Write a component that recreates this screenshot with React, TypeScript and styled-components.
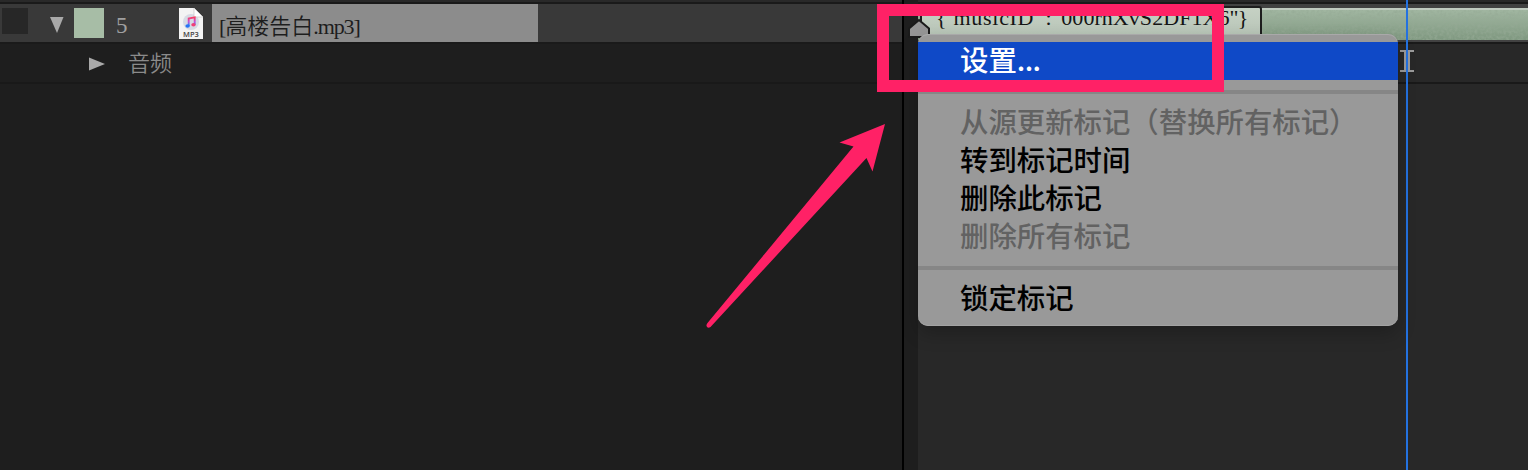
import React from 'react';
import styled, { createGlobalStyle } from 'styled-components';

const Global = createGlobalStyle`
  * { box-sizing: border-box; }
  body { margin: 0; background: #1e1e1e; overflow: hidden; }
`;

const PINK = '#ff2166';
const serif = '"Liberation Serif", "Noto Sans CJK SC", serif';

const Screen = styled.div`
  position: relative;
  display: flex;
  width: 1528px;
  height: 470px;
  overflow: hidden;
  background: #1e1e1e;
`;

const LayerPanel = styled.section`
  display: flex;
  flex-direction: column;
  width: 902px;
  border-top: 2px solid #292929;
`;

const LayerRow = styled.div<{ $selected?: boolean }>`
  display: flex;
  height: 40px;
  border-top: 2px solid #1a1a1a;
  background: ${(p) => (p.$selected ? '#393939' : '#1e1e1e')};
`;

const Rest = styled.div`
  flex: 1;
  border-top: 2px solid #191919;
`;

const Switch = styled.div`
  width: 26px;
  height: 26px;
  margin: 4px 0 0 2px;
  background: #272727;
`;

const TwirlDown = styled.svg`
  width: 14px;
  height: 17px;
  margin: 13px 0 0 22px;
`;

const LabelSwatch = styled.div`
  width: 30px;
  height: 30px;
  margin: 4px 0 0 10px;
  background: #a7bda6;
`;

const LayerNumber = styled.span`
  width: 62px;
  margin: 8px 0 0 12px;
  font: 23px/28px ${serif};
  color: #a0a0a0;
`;

const FileIcon = styled.svg`
  width: 26px;
  height: 32px;
  margin: 4px 0 0 0;
`;

const SourceName = styled.div`
  width: 326px;
  height: 38px;
  margin-left: 8px;
  padding: 8px 0 0 7px;
  background: #8c8c8c;
  font: 350 22px/30px ${serif};
  color: #1d1d1d;
  white-space: nowrap;
`;

const Latin = styled.span`
  letter-spacing: -1.1px;
`;

const TwirlRight = styled.svg`
  width: 17px;
  height: 14px;
  margin: 13px 0 0 88px;
`;

const GroupName = styled.span`
  margin: 1px 0 0 23px;
  font: 350 22px/32px "Noto Sans CJK SC", sans-serif;
  color: #8b8b8b;
`;

const Gutter = styled.div`
  width: 16px;
  border-left: 2px solid #000;
  background: #1e1e1e;
`;

const Timeline = styled.section`
  display: flex;
  flex: 1;
  flex-direction: column;
  border-top: 2px solid #292929;
  background: #282828;
`;

const Track = styled.div<{ $clip?: boolean }>`
  height: 40px;
  border-top: 2px solid #1a1a1a;
  padding-top: 4px;
  background: ${(p) => (p.$clip ? '#424242' : '#282828')};
`;

const Clip = styled.svg`
  display: block;
  width: 610px;
  height: 32px;
`;

const MarkerLabel = styled.div`
  position: absolute;
  left: 920px;
  top: 6px;
  width: 342px;
  height: 40px;
  padding-left: 14px;
  border: 2px solid #1d1d1d;
  border-top-right-radius: 3px;
  background: linear-gradient(#c6d1c4, #b3c1b3);
  font: 22px/20px ${serif};
  color: #151515;
  white-space: pre;
`;

const Tracked = styled.span<{ $by: number }>`
  letter-spacing: ${(p) => p.$by}px;
`;

const MarkerPin = styled.svg`
  position: absolute;
  left: 907px;
  top: 17px;
  width: 24px;
  height: 22px;
`;

const Playhead = styled.div`
  position: absolute;
  left: 1406px;
  top: 0;
  width: 2px;
  height: 470px;
  background: #2472e0;
`;

const TextCursor = styled.svg`
  position: absolute;
  left: 1400px;
  top: 50px;
  width: 14px;
  height: 22px;
`;

const Menu = styled.ul`
  position: absolute;
  left: 918px;
  top: 34px;
  width: 480px;
  height: 292px;
  margin: 0;
  padding: 8px 0 0;
  list-style: none;
  border-radius: 10px;
  background: #999;
  box-shadow: 0 8px 18px rgba(0, 0, 0, 0.22), inset 0 1px 0 #a9a9a9, inset 0 -1px 0 #a3a3a3;
`;

const MenuItem = styled.li<{ $active?: boolean; $disabled?: boolean }>`
  height: 38px;
  padding-left: 42px;
  font: 500 28.4px/33px "Noto Sans CJK SC", sans-serif;
  color: ${(p) => (p.$active ? '#fff' : p.$disabled ? '#626262' : '#000')};
  background: ${(p) => (p.$active ? '#0f49c7' : 'transparent')};
  white-space: nowrap;
`;

const Separator = styled.li`
  height: 4px;
  margin: 10px 0;
  background: #868686;
`;

const Highlight = styled.div`
  position: absolute;
  left: 877px;
  top: 4px;
  width: 347px;
  height: 88px;
  border: 12px solid ${PINK};
`;

const Arrow = styled.svg`
  position: absolute;
  left: 700px;
  top: 120px;
  width: 190px;
  height: 212px;
`;

export default function App() {
  return (
    <Screen>
      <Global />
      <LayerPanel>
        <LayerRow $selected>
          <Switch />
          <TwirlDown viewBox="0 0 14 17"><path d="M0 0h13.5L7 16z" fill="#a9a9a9" /></TwirlDown>
          <LabelSwatch />
          <LayerNumber>5</LayerNumber>
          <FileIcon viewBox="0 0 26 32">
            <defs>
              <linearGradient id="note" x1="0" y1="0" x2="0" y2="1">
                <stop offset="0" stopColor="#fa3d62" />
                <stop offset=".5" stopColor="#c552d8" />
                <stop offset="1" stopColor="#2494f5" />
              </linearGradient>
            </defs>
            <path d="M1 0h15l9 9v22H1z" fill="#f3f3f3" />
            <circle cx="13" cy="14" r="8" fill="#d6dae4" />
            <path d="M16 0v9h9z" fill="#fff" stroke="#c5c5c5" strokeWidth=".7" />
            <path d="M10.700 18v-7.500l6-1.200v7.500" fill="none" stroke="url(#note)" strokeWidth="1.900" />
            <ellipse cx="9.600" cy="18" rx="2.200" ry="1.700" fill="#2474f5" />
            <ellipse cx="15.500" cy="16.800" rx="2.200" ry="1.700" fill="#f13e78" />
            <text x="13" y="29" textAnchor="middle" fontFamily="Open Sans, sans-serif" fontSize="7.500" fontWeight="600" fill="#444">MP3</text>
          </FileIcon>
          <SourceName><Latin>[</Latin>高楼告白<Latin>.mp3]</Latin></SourceName>
        </LayerRow>
        <LayerRow>
          <TwirlRight viewBox="0 0 17 14"><path d="M1 .5 17 7 1 13.5z" fill="#a9a9a9" /></TwirlRight>
          <GroupName>音频</GroupName>
        </LayerRow>
        <Rest />
      </LayerPanel>
      <Gutter />
      <Timeline>
        <Track $clip>
          <Clip viewBox="0 0 610 32">
            <defs>
              <linearGradient id="clip" x1="0" y1="0" x2="0" y2="1">
                <stop offset="0" stopColor="#a3b8a3" />
                <stop offset="1" stopColor="#7f9880" />
              </linearGradient>
              <filter id="grain" x="0" y="0" width="100%" height="100%">
                <feTurbulence type="fractalNoise" baseFrequency=".35" numOctaves="2" />
                <feColorMatrix values="0 0 0 0 .3  0 0 0 0 .4  0 0 0 0 .3  1.6 0 0 0 -.6" />
              </filter>
            </defs>
            <rect width="610" height="32" fill="url(#clip)" />
            <rect width="610" height="32" filter="url(#grain)" />
            <rect width="610" height="2" fill="#c0cbc0" />
          </Clip>
        </Track>
        <Track />
        <Rest />
      </Timeline>
      <MarkerLabel>
        <Tracked $by={-1}>{'{"'}</Tracked>
        <Tracked $by={0.7}>musicID</Tracked>
        <Tracked $by={-1.6}>{'" : "'}</Tracked>
        <Tracked $by={0.05}>000rnXvS2DF1X6</Tracked>
        <Tracked $by={-0.6}>{'"}'}</Tracked>
      </MarkerLabel>
      <MarkerPin viewBox="0 0 24 22">
        <path d="M2 20V11.500L12 3l10 8.500V20z" fill="#969696" stroke="#1b1b1b" strokeWidth="2" />
      </MarkerPin>
      <TextCursor viewBox="0 0 14 22">
        <path d="M0 1h14M0 21h14M5 1v20M9 1v20" fill="none" stroke="#9b9b9b" strokeWidth="2" />
      </TextCursor>
      <Playhead />
      <Menu>
        <MenuItem $active>设置<Tracked $by={-0.6}>...</Tracked></MenuItem>
        <Separator />
        <MenuItem $disabled>从源更新标记（替换所有标记）</MenuItem>
        <MenuItem>转到标记时间</MenuItem>
        <MenuItem>删除此标记</MenuItem>
        <MenuItem $disabled>删除所有标记</MenuItem>
        <Separator />
        <MenuItem>锁定标记</MenuItem>
      </Menu>
      <Highlight />
      <Arrow viewBox="700 120 190 212">
        <path d="M885 124 872.500 171.500 866.500 158 710.500 327Q707.500 329 706.500 326 706.300 324.500 707.500 323L853.500 146.500 839.500 142.500z" fill={PINK} />
      </Arrow>
    </Screen>
  );
}
